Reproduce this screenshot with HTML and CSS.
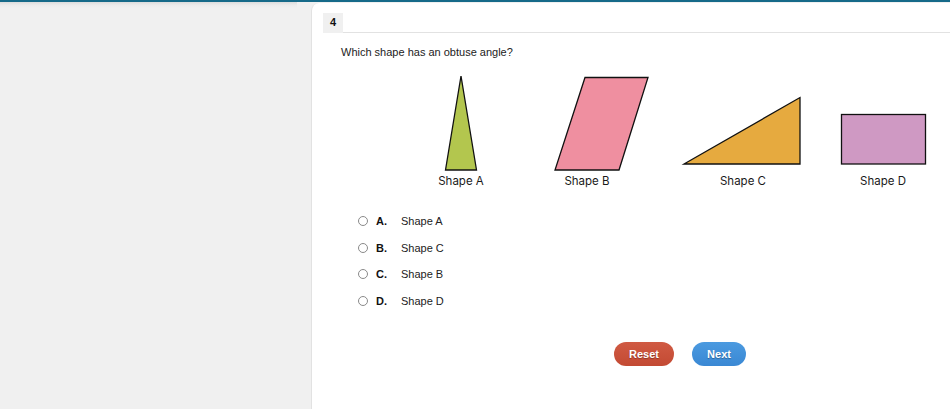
FILE: index.html
```html
<!DOCTYPE html>
<html>
<head>
<meta charset="utf-8">
<link rel="stylesheet" href="styles.css">
</head>
<body>
<div class="topbar"></div>
<div class="layout">
  <aside class="side"></aside>
  <div class="gap"></div>
  <main class="card">
    <div class="card-head"><span class="qnum">4</span></div>
    <div class="body">
      <p class="question">Which shape has an obtuse angle?</p>
      <svg class="figure" width="530" height="132" viewBox="420 62 530 132">
        <polygon points="461,76 445.5,170 476.5,170" fill="#b3c64e" stroke="#111" stroke-width="1.3" stroke-linejoin="miter"/>
        <polygon points="585,77.5 648,77.5 619,170 555,170" fill="#ef8fa0" stroke="#111" stroke-width="1.3"/>
        <polygon points="684,164 800,97.5 800,164" fill="#e6aa3f" stroke="#111" stroke-width="1.3"/>
        <rect x="841.5" y="114.5" width="84" height="49.5" fill="#cf99c3" stroke="#111" stroke-width="1.3"/>
        <text x="461" y="185" class="lbl">Shape A</text>
        <text x="587" y="185" class="lbl">Shape B</text>
        <text x="743" y="185" class="lbl">Shape C</text>
        <text x="883" y="185" class="lbl">Shape D</text>
      </svg>
      <ul class="options">
        <li class="opt"><span class="radio"></span><b class="letter">A.</b><span>Shape A</span></li>
        <li class="opt"><span class="radio"></span><b class="letter">B.</b><span>Shape C</span></li>
        <li class="opt"><span class="radio"></span><b class="letter">C.</b><span>Shape B</span></li>
        <li class="opt"><span class="radio"></span><b class="letter">D.</b><span>Shape D</span></li>
      </ul>
      <div class="actions">
        <button class="btn reset">Reset</button>
        <button class="btn next">Next</button>
      </div>
    </div>
  </main>
</div>
</body>
</html>
```
FILE: styles.css
```css
html, body {
  margin: 0;
  padding: 0;
  height: 100%;
  background: #f0f0f0;
  font-family: "Liberation Sans", Arial, sans-serif;
  overflow: hidden;
}
.topbar {
  height: 2px;
  background: #166a89;
}
.layout {
  display: flex;
  height: 407px;
}
.side {
  width: 297px;
  background: linear-gradient(#dcdcdc 0, #ebebeb 3px, #f0f0f0 6px);
}
.gap {
  width: 14px;
  background: #f0f0f0;
}
.card {
  flex: 1;
  margin-top: 1px;
  background: #fff;
  border-left: 1px solid #e2e2e2;
  border-top-left-radius: 8px;
  padding: 9px 0 0 11px;
}
.card-head {
  border-bottom: 1px solid #e2e2e2;
  height: 20px;
}
.qnum {
  display: inline-block;
  width: 20px;
  height: 20px;
  line-height: 18px;
  text-align: center;
  background: #f0f0f0;
  font-weight: bold;
  font-size: 11px;
  color: #111;
}
.body {
  padding-left: 18px;
}
.question {
  margin: 12px 0 0;
  font-size: 11px;
  line-height: 14px;
  color: #222;
}
.figure {
  display: block;
  margin: 3px 0 0 79px;
}
.lbl {
  font-family: Inter, "Open Sans", sans-serif;
  font-size: 11.5px;
  fill: #1a1a1a;
  text-anchor: middle;
}
.options {
  list-style: none;
  margin: 14px 0 0;
  padding: 0 0 0 17px;
}
.opt {
  display: flex;
  align-items: center;
  height: 26.5px;
  font-size: 11px;
  color: #222;
}
.radio {
  width: 8px;
  height: 8px;
  border: 1px solid #8a8a8a;
  border-radius: 50%;
  margin-right: 8px;
  background: #fff;
}
.letter {
  width: 25px;
  color: #111;
}
.actions {
  display: flex;
  gap: 18px;
  margin: 28px 0 0 273px;
}
.btn {
  height: 24px;
  border: none;
  border-radius: 12px;
  color: #fff;
  font-family: "Liberation Sans", Arial, sans-serif;
  font-weight: bold;
  font-size: 11px;
  padding: 0;
  text-shadow: 0 1px 1px rgba(0,0,0,0.3);
}
.reset {
  width: 60px;
  background: linear-gradient(#d05a43, #c34a33);
}
.next {
  width: 54px;
  background: linear-gradient(#4b9ae0, #3a88d4);
}
```
